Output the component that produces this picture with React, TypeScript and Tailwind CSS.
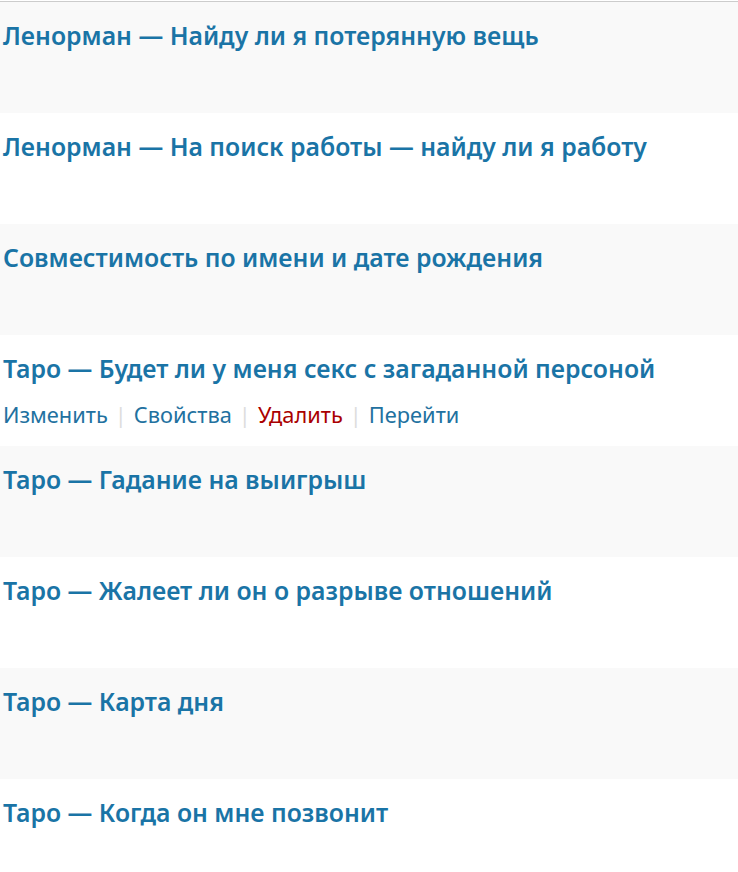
import React from 'react';

const rows = [
  { title: 'Ленорман — Найду ли я потерянную вещь' },
  { title: 'Ленорман — На поиск работы — найду ли я работу' },
  { title: 'Совместимость по имени и дате рождения' },
  { title: 'Таро — Будет ли у меня секс с загаданной персоной', actions: true },
  { title: 'Таро — Гадание на выигрыш' },
  { title: 'Таро — Жалеет ли он о разрыве отношений' },
  { title: 'Таро — Карта дня' },
  { title: 'Таро — Когда он мне позвонит' },
];

export default function App() {
  return (
    <div className="min-h-screen bg-white pt-px" style={{ fontFamily: '"Noto Sans", "Open Sans", sans-serif' }}>
      <div className="border-t border-[#ccc]">
        {rows.map((row, i) => (
          <div
            key={i}
            className={`h-[111px] pl-[3px] pr-1 pt-[15px] ${i % 2 === 0 ? 'bg-[#f9f9f9]' : 'bg-white'}`}
          >
            <a className="block text-[24.8px] leading-[36px] font-semibold text-[#1a74a6] whitespace-nowrap">
              {row.title}
            </a>
            {row.actions && (
              <div className="mt-[15px] flex items-center text-[21.8px] leading-[28px] text-[#2271a0] whitespace-nowrap">
                <span>Изменить</span>
                <span className="mx-[7px] text-[#ddd]">|</span>
                <span>Свойства</span>
                <span className="mx-[7px] text-[#ddd]">|</span>
                <span className="text-[#a00]">Удалить</span>
                <span className="mx-[7px] text-[#ddd]">|</span>
                <span>Перейти</span>
              </div>
            )}
          </div>
        ))}
      </div>
    </div>
  );
}
